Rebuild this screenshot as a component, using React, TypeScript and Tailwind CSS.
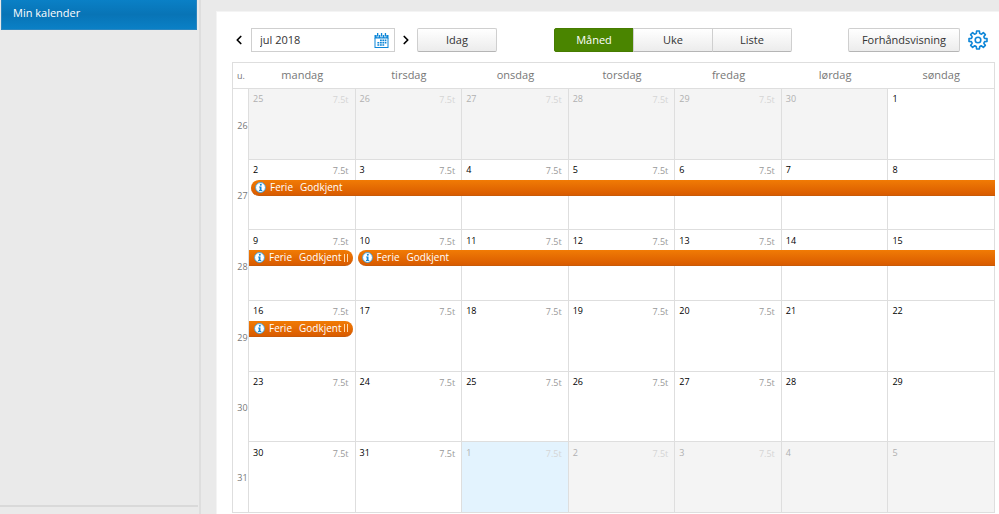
import React, { useState } from 'react';
import { ChevronLeft, ChevronRight } from 'lucide-react';

type View = 'Måned' | 'Uke' | 'Liste';

interface Day {
  date: number;
  hours?: boolean;
  outside?: boolean;
  today?: boolean;
  event?: 'start' | 'middle' | 'single';
}

interface Week {
  number: number;
  days: Day[];
}

const weekdays = ['mandag', 'tirsdag', 'onsdag', 'torsdag', 'fredag', 'lørdag', 'søndag'];
const views: View[] = ['Måned', 'Uke', 'Liste'];

const buildWeeks = (): Week[] =>
  [0, 1, 2, 3, 4, 5].map((w) => ({
    number: 26 + w,
    days: weekdays.map((_, d) => {
      // day 1 is sunday in the first week
      const n = w * 7 + d - 5;
      const day: Day = { date: n, hours: d < 5 };
      if (n < 1) {
        day.date = 30 + n;
        day.outside = true;
      } else if (n > 31) {
        day.date = n - 31;
        day.outside = true;
        day.today = n === 32;
      }
      if (n === 2 || n === 10) day.event = 'start';
      else if (n === 9 || n === 16) day.event = 'single';
      else if (n > 2 && n < 16) day.event = 'middle';
      return day;
    }),
  }));

const weeks = buildWeeks();

const CalendarIcon = () => (
  <svg width="15" height="15" viewBox="0 0 15 15" fill="#0d86d8">
    <path d="M0.5 2h2.2v2.2h2V2h1.6v2.2h2.4V2h1.6v2.2h2V2h2.2v3.4H0.5z" />
    <path d="M3 0h1.3v3.6H3zM6.9 0h1.3v3.6H6.9zM10.8 0h1.3v3.6h-1.3z" />
    <path d="M0.5 5h1v9h12V5h1v10H0.5z" />
    <path d="M6 6.6h1.8v1.6H6zM8.4 6.6h1.8v1.6H8.4zM10.8 6.6h1.6v1.6h-1.6zM3.4 8.9h1.9v1.6H3.4zM6 8.9h1.8v1.6H6zM8.4 8.9h1.8v1.6H8.4zM10.8 8.9h1.6v1.6h-1.6zM3.4 11.2h1.9v1.6H3.4zM6 11.2h1.8v1.6H6zM8.4 11.2h1.8v1.6H8.4z" />
  </svg>
);

// eight rounded teeth around a small hub
const tooth = (i: number) => {
  const p = (r: number, deg: number) => {
    const a = ((i * 45 + deg - 90) * Math.PI) / 180;
    return `${(10 + r * Math.cos(a)).toFixed(2)} ${(10 + r * Math.sin(a)).toFixed(2)}`;
  };
  return `${i === 0 ? 'M' : 'L'}${p(6.9, -14)} L${p(9.1, -9)} L${p(9.1, 9)} L${p(6.9, 14)} Q${p(6.3, 22.5)} ${p(6.9, 31)}`;
};

const GearIcon = () => (
  <svg width="20" height="20" viewBox="0 0 20 20" fill="none" stroke="#0d86d8" strokeWidth="1.6" strokeLinejoin="round">
    <path d={[0, 1, 2, 3, 4, 5, 6, 7].map(tooth).join(' ') + 'Z'} />
    <circle cx="10" cy="10" r="2.8" />
  </svg>
);

const InfoIcon = () => (
  <svg width="11" height="11" viewBox="0 0 10 10" className="shrink-0">
    <circle cx="5" cy="5" r="4.5" fill="#fff" stroke="#4a9fd4" strokeWidth="0.9" />
    <circle cx="5.3" cy="2.6" r="0.9" fill="#0d86d8" />
    <path d="M3.8 4.1h2.1v3.1h0.7v0.9H3.6v-0.9h0.7V5h-0.5z" fill="#0d86d8" />
  </svg>
);

const eventShape = {
  start: 'ml-[2px] -mr-px rounded-l-full pl-1',
  middle: '-mr-px',
  single: 'mr-[2px] rounded-r-full pl-[5px]',
};

const EventBar: React.FC<{ kind: 'start' | 'middle' | 'single' }> = ({ kind }) => (
  <div
    className={`flex h-4 items-center overflow-hidden border-b border-[#c85a08] bg-linear-to-b from-[#f17b05] to-[#d95b00] text-[10px] whitespace-nowrap text-white ${eventShape[kind]}`}
  >
    {kind !== 'middle' && (
      <>
        <InfoIcon />
        <span className="ml-1">Ferie</span>
        <span className="ml-[7px]">Godkjent</span>
      </>
    )}
    {kind === 'single' && <span className="ml-[2px] h-2 w-1 shrink-0 border-x border-orange-200" />}
  </div>
);

const buttonStyle =
  'h-6 border border-[#cfcfcf] border-b-[#b5b5b5] bg-linear-to-b from-white to-[#ececec] text-[#333]';

const App: React.FC = () => {
  const [view, setView] = useState<View>('Måned');
  const [month, setMonth] = useState('jul 2018');

  return (
    <div className="flex h-screen min-h-[400px] bg-[#eaeaea] font-['Open_Sans',sans-serif] text-[11px] text-[#333]">
      <aside className="flex w-[201px] shrink-0 flex-col justify-between border-r-2 border-[#dedede] pr-px">
        <a
          href="#kalender"
          className="mr-px ml-px flex h-[30px] items-center border border-t-0 border-[#2b86c0] bg-linear-to-b from-[#0a80c6] via-[#0874b6] to-[#0a80c6] pb-[2px] pl-[11px] text-white"
        >
          Min kalender
        </a>
        <div className="h-[9px] border-t-2 border-[#d9d9d9]" />
      </aside>

      <main className="mt-[11px] ml-[15px] flex min-w-0 flex-1 flex-col border-t border-l border-[#f4f4f4] bg-white pt-4 pr-1 pb-px pl-[15px]">
        <div className="flex h-6 items-center justify-between pr-[7px]">
          <div className="flex items-center">
            <button aria-label="Forrige måned" className="flex w-[19px] justify-start text-black">
              <ChevronLeft size={14} strokeWidth={3} />
            </button>
            <div className="flex h-6 w-36 items-center border border-[#cfcfcf] pr-[5px]">
              <input
                type="text"
                aria-label="Måned"
                value={month}
                onChange={(e) => setMonth(e.target.value)}
                className="min-w-0 flex-1 pl-2 outline-none"
              />
              <button aria-label="Velg dato">
                <CalendarIcon />
              </button>
            </div>
            <button aria-label="Neste måned" className="flex w-[22px] justify-center text-black">
              <ChevronRight size={14} strokeWidth={3} />
            </button>
            <button className={`w-20 rounded-[2px] ${buttonStyle}`}>Idag</button>
          </div>

          <div className="flex">
            {views.map((v) => (
              <button
                key={v}
                onClick={() => setView(v)}
                className={`-mr-px w-20 first:rounded-l-[2px] last:rounded-r-[2px] ${
                  view === v ? 'h-6 border border-[#467c00] bg-[#4a8500] text-white' : buttonStyle
                }`}
              >
                {v}
              </button>
            ))}
          </div>

          <div className="flex items-center gap-2">
            <button className={`w-28 rounded-[2px] ${buttonStyle}`}>Forhåndsvisning</button>
            <button aria-label="Innstillinger">
              <GearIcon />
            </button>
          </div>
        </div>

        <div className="mt-[10px] min-h-0 flex-1">
          <table className="h-full w-full table-fixed border-separate border-spacing-0 border-t border-l border-[#dedede]">
            <thead>
              <tr className="h-[26px] text-[#777]">
                <th className="w-4 border-b border-[#dedede] text-[9px] font-normal">u.</th>
                {weekdays.map((name) => (
                  <th key={name} className="border-b border-[#dedede] font-normal last:border-r">
                    {name}
                  </th>
                ))}
              </tr>
            </thead>
            <tbody>
              {weeks.map((week) => (
                <tr key={week.number} className="group h-[70px]">
                  <th className="border-r border-[#dedede] pt-[2px] pl-1 text-[9px] font-normal text-[#777] group-last:border-b">
                    {week.number}
                  </th>
                  {week.days.map((day, i) => (
                    <td
                      key={i}
                      className={`border-r border-b border-[#dedede] align-top text-[9px] ${
                        day.today ? 'bg-[#e3f3fe]' : day.outside ? 'bg-[#f4f4f4]' : 'bg-white'
                      }`}
                    >
                      <div className="flex h-5 items-center justify-between pr-[6px] pl-1">
                        <span className={day.outside ? 'text-[#b0b0b0]' : 'text-black'}>{day.date}</span>
                        {day.hours && (
                          <span className={`pt-[2px] ${day.outside ? 'text-[#d5d5d5]' : 'text-[#999]'}`}>7.5t</span>
                        )}
                      </div>
                      {day.event && <EventBar kind={day.event} />}
                    </td>
                  ))}
                </tr>
              ))}
            </tbody>
          </table>
        </div>
      </main>
    </div>
  );
};

export default App;
